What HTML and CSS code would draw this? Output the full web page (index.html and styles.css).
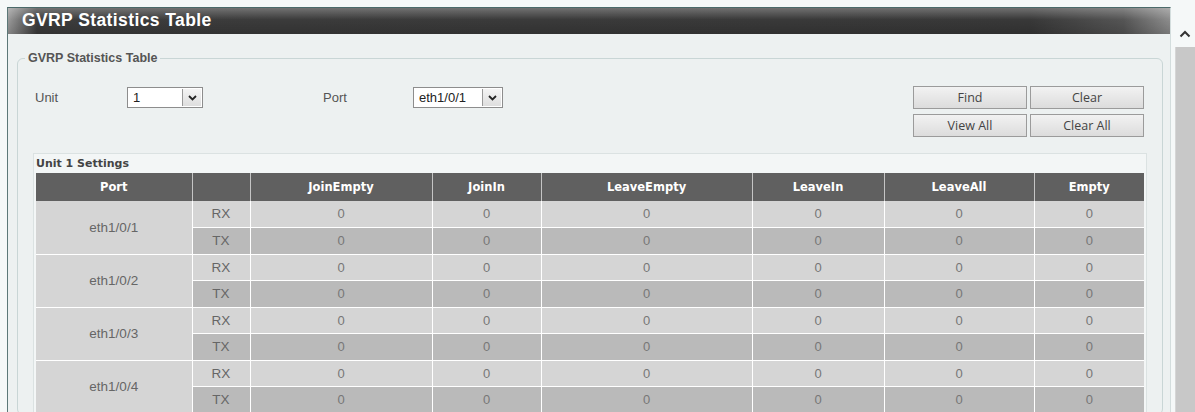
FILE: index.html
```html
<!DOCTYPE html>
<html lang="en">
  <head>
    <meta charset="UTF-8" />
    <title>GVRP Statistics Table</title>
    <link rel="stylesheet" href="styles.css">
  </head>
  <body>
    <div class="frame">
      <div class="title-bar">GVRP Statistics Table</div>
      <div class="content">
        <fieldset class="panel">
          <legend>GVRP Statistics Table</legend>
          <div class="controls">
            <label class="field-label unit-label">Unit</label>
            <div class="select unit-select">
              <span class="select-value">1</span>
              <span class="select-arrow"><svg width="9" height="6" viewBox="0 0 9 6"><polyline points="1,1 4.5,4.5 8,1" fill="none" stroke="#222" stroke-width="1.8"/></svg></span>
            </div>
            <label class="field-label port-label">Port</label>
            <div class="select port-select">
              <span class="select-value">eth1/0/1</span>
              <span class="select-arrow"><svg width="9" height="6" viewBox="0 0 9 6"><polyline points="1,1 4.5,4.5 8,1" fill="none" stroke="#222" stroke-width="1.8"/></svg></span>
            </div>
            <div class="buttons">
              <button>Find</button>
              <button>Clear</button>
              <button>View All</button>
              <button>Clear All</button>
            </div>
          </div>

          <div class="settings">
            <div class="settings-title">Unit 1 Settings</div>
            <table class="stats">
              <colgroup>
                <col style="width:156px"><col style="width:58px"><col style="width:182px"><col style="width:109px">
                <col style="width:211px"><col style="width:132px"><col style="width:150px"><col style="width:110px">
              </colgroup>
              <thead>
                <tr>
                  <th>Port</th><th></th><th>JoinEmpty</th><th>JoinIn</th>
                  <th>LeaveEmpty</th><th>LeaveIn</th><th>LeaveAll</th><th>Empty</th>
                </tr>
              </thead>
              <tbody id="statsBody"></tbody>
            </table>
          </div>
        </fieldset>
      </div>
    </div>
    <div class="scrollbar">
      <div class="scroll-up"><svg width="12" height="8" viewBox="0 0 12 8"><polyline points="1.5,6.5 6,2 10.5,6.5" fill="none" stroke="#333" stroke-width="2"/></svg></div>
      <div class="scroll-track"></div>
    </div>

    <script>
      var ports = ["eth1/0/1", "eth1/0/2", "eth1/0/3", "eth1/0/4"];
      var body = document.getElementById("statsBody");
      var html = "";
      for (var i = 0; i < ports.length; i++) {
        html += "<tr class=\"rx\"><td class=\"port\" rowspan=\"2\">" + ports[i] + "</td><td class=\"dir\">RX</td>";
        for (var j = 0; j < 6; j++) html += "<td>0</td>";
        html += "</tr>";
        html += "<tr class=\"tx\"><td class=\"dir\">TX</td>";
        for (var k = 0; k < 6; k++) html += "<td>0</td>";
        html += "</tr>";
      }
      body.innerHTML = html;
    </script>
  </body>
</html>
```

FILE: styles.css
```css
/* General styles */
* {
  box-sizing: border-box;
}

body {
  margin: 0;
  padding: 7px 0 0 7px;
  height: 412px;
  overflow: hidden;
  display: flex;
  background-color: #f5f8f8;
  font-family: "Liberation Sans", Arial, sans-serif;
}

.frame {
  width: 1164px;
  height: 405px;
  border-top: 1px solid #4b6a6a;
  border-left: 1px solid #5c7878;
  border-right: 1px solid #d3dddd;
  background-color: #edf1f1;
}

.title-bar {
  height: 26px;
  padding-left: 14px;
  line-height: 25px;
  color: #fff;
  font-size: 17.5px;
  font-weight: bold;
  letter-spacing: 0.4px;
  background:
    linear-gradient(to bottom, rgba(255, 255, 255, 0.28), rgba(255, 255, 255, 0) 45%, rgba(0, 0, 0, 0.15)),
    linear-gradient(to right, #9a9a9a 0, #3c3c3c 2.5%, #383838 88%, #555 96%, #8c8c8c 100%);
}

.content {
  padding: 17px 7px 0 9px;
}

.panel {
  margin: 0;
  padding: 21px 18px 0 17px;
  border: 1px solid #c9d6d6;
  border-radius: 6px;
}

.panel legend {
  margin-left: -10px;
  padding: 0 3px;
  line-height: 14px;
  font-size: 12.5px;
  font-weight: bold;
  color: #555;
}

.controls {
  display: flex;
  align-items: flex-start;
  height: 51px;
}

.field-label {
  font-size: 13px;
  color: #555;
  line-height: 21px;
  padding-top: 1px;
}

.unit-label {
  width: 92px;
}

.port-label {
  width: 90px;
  margin-left: 120px;
}

.select {
  display: flex;
  height: 21px;
  margin-top: 1px;
  border: 1px solid #8d8d8d;
  background-color: #fff;
}

.unit-select {
  width: 76px;
}

.port-select {
  width: 90px;
}

.select-value {
  flex: 1;
  padding-left: 5px;
  font-size: 13px;
  line-height: 19px;
  color: #222;
}

.select-arrow {
  width: 19px;
  display: flex;
  align-items: center;
  justify-content: center;
  border-left: 1px solid #9a9a9a;
  background: linear-gradient(#f4f4f4, #dedede);
  margin: 1px;
}

.buttons {
  margin-left: auto;
  display: grid;
  grid-template-columns: 114px 114px;
  grid-auto-rows: 23px;
  column-gap: 3px;
  row-gap: 5px;
}

.buttons button {
  margin: 0;
  padding: 0;
  border: 1px solid #9b9b9b;
  background: linear-gradient(#f2f2f2, #dcdcdc);
  font-family: "Open Sans", sans-serif;
  font-size: 12.5px;
  color: #444;
}

.settings {
  margin-top: 16px;
  margin-left: -2px;
  margin-right: -3px;
  padding: 0 1px;
  border: 1px solid #dbe2e2;
  border-bottom: none;
  background-color: #f3f6f6;
}

.settings-title {
  height: 19px;
  padding-left: 1px;
  line-height: 20px;
  font-family: "DejaVu Sans", Verdana, sans-serif;
  font-size: 11px;
  font-weight: bold;
  color: #444;
}

.stats {
  width: 1108px;
  table-layout: fixed;
  border-collapse: collapse;
  margin-left: 1px;
}

.stats th {
  height: 28px;
  padding: 0;
  background-color: #606060;
  border-right: 1px solid #c4c4c4;
  color: #fff;
  font-family: "DejaVu Sans", Verdana, sans-serif;
  font-size: 11.5px;
  font-weight: bold;
}

.stats th:last-child {
  border-right: none;
}

.stats td {
  padding: 0;
  text-align: center;
  border: 1px solid #fff;
  border-top: none;
  border-left: none;
  font-size: 13px;
  color: #777;
}

.stats td:last-child {
  border-right: none;
}

.stats tr.rx td {
  height: 26px;
  background-color: #d5d5d5;
}

.stats tr.tx td {
  height: 27px;
  background-color: #bababa;
}

.stats td.port {
  background-color: #d5d5d5;
  font-size: 13.5px;
  color: #666;
}

.stats td.dir {
  color: #666;
  font-size: 13.5px;
}

.scrollbar {
  width: 20px;
  margin-left: 4px;
  margin-top: -7px;
  display: flex;
  flex-direction: column;
}

.scroll-up {
  height: 47px;
  padding-top: 24px;
  text-align: center;
}

.scroll-track {
  flex: 1;
  background-color: #c8c8c8;
  border-left: 1px solid #d6d6d6;
}
```
